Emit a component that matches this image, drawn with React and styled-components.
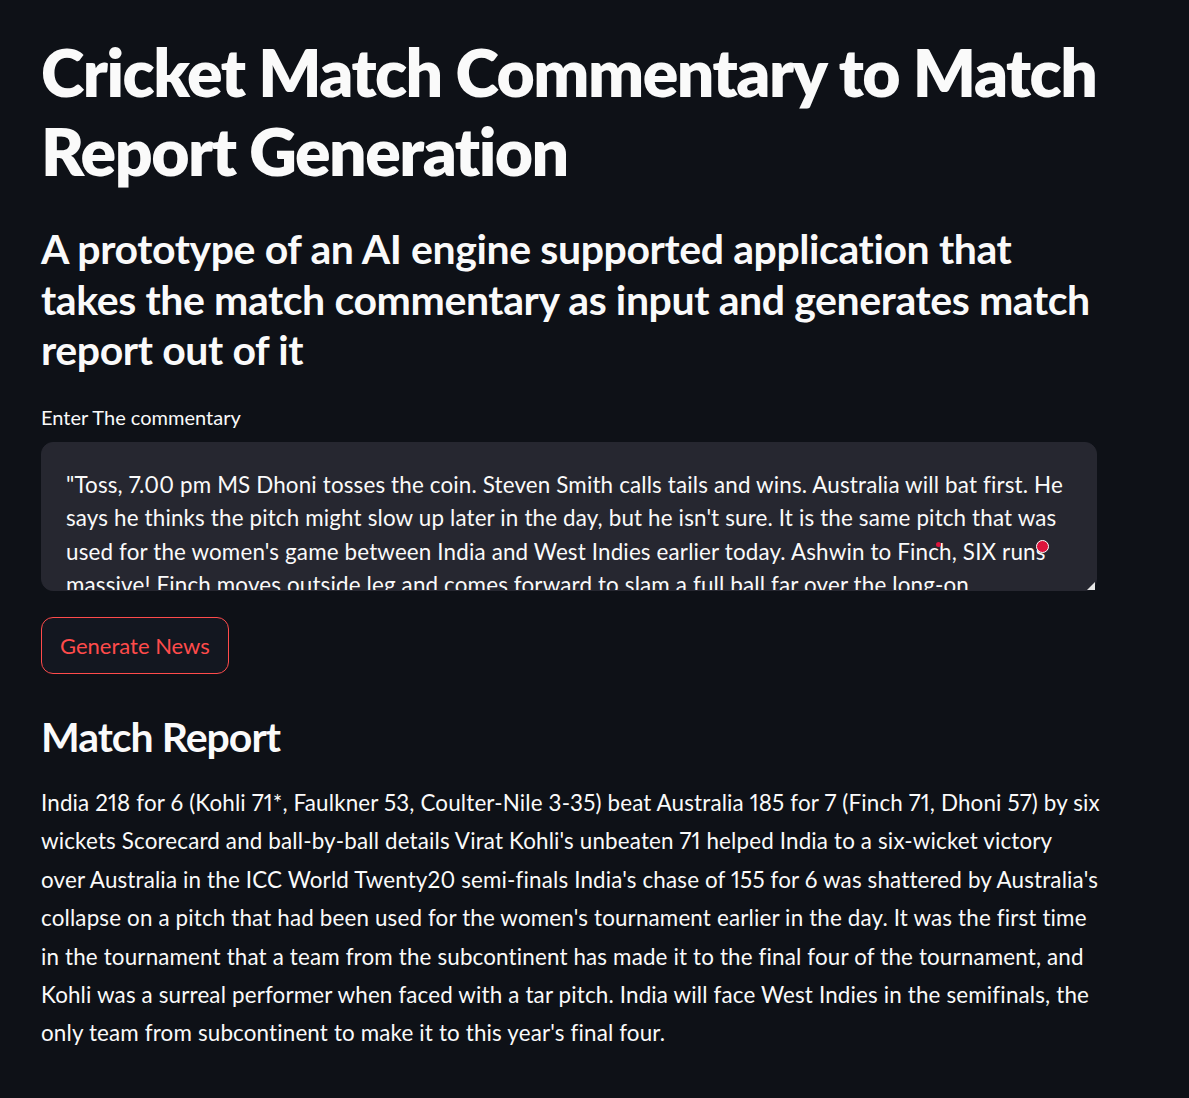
import React from "react";
import styled, { createGlobalStyle } from "styled-components";

const GlobalStyle = createGlobalStyle`
  html, body {
    margin: 0;
    padding: 0;
    background-color: #0e1117;
  }
  body {
    font-family: "Lato", "Noto Sans", sans-serif;
    color: #fafafa;
  }
`;

const Page = styled.div`
  width: 100%;
  min-height: 1098px;
  background-color: #0e1117;
`;

const Main = styled.div`
  width: 1056px;
  padding: 32px 0 40px 41px;
  display: flex;
  flex-direction: column;
`;

const Title = styled.h1`
  margin: 0;
  font-size: 66px;
  line-height: 1.2;
  font-weight: 800;
  letter-spacing: -1.5px;
`;

const SubHeader = styled.h3`
  margin: ${(props) => (props.type === "report" ? "38px 0 0" : "34px 0 0")};
  font-size: 41px;
  line-height: 50.4px;
  font-weight: 700;
  letter-spacing: ${(props) => (props.type === "report" ? "-1px" : "-0.4px")};
`;

const Line = styled.span`
  display: block;
  white-space: nowrap;
`;

const Label = styled.label`
  margin-top: 26px;
  font-size: 20px;
  line-height: 31px;
`;

const Field = styled.div`
  position: relative;
  margin-top: 9px;
`;

const TextArea = styled.textarea`
  box-sizing: border-box;
  display: block;
  width: 1056px;
  height: 149px;
  padding: 25px 24px;
  border: 1px solid #262730;
  border-radius: 12px;
  background-color: #262730;
  color: #fafafa;
  font-family: "Lato", "Noto Sans", sans-serif;
  font-size: 22.4px;
  line-height: 33.6px;
  letter-spacing: 0.15px;
  font-variant-numeric: proportional-nums;
  resize: none;
  outline: none;
  overflow: hidden;
`;

const Grip = styled.span`
  position: absolute;
  right: 2px;
  bottom: 1px;
  width: 0;
  height: 0;
  border-style: solid;
  border-width: 0 0 8px 8px;
  border-color: transparent transparent #e6e6e6 transparent;
`;

const Dot = styled.span`
  position: absolute;
  border-radius: 50%;
  background-color: #dc143c;
  left: ${(props) => props.x}px;
  top: ${(props) => props.y}px;
  width: ${(props) => props.size}px;
  height: ${(props) => props.size}px;
  border: ${(props) => (props.ring ? "1.5px solid #ffffff" : "none")};
  box-sizing: border-box;
`;

const Button = styled.button`
  align-self: flex-start;
  margin-top: 26px;
  height: 57px;
  padding: 0 18px;
  border: 1px solid #ff4b4b;
  border-radius: 12px;
  background-color: #131720;
  color: #ff4b4b;
  font-family: "Lato", "Noto Sans", sans-serif;
  font-size: 22px;
`;

const Report = styled.p`
  margin: 22px 0 0;
  font-size: 22.4px;
  line-height: 38.4px;
  letter-spacing: 0.15px;
  font-variant-numeric: proportional-nums;
`;

const commentary =
  "\"Toss, 7.00 pm MS Dhoni tosses the coin. Steven Smith calls tails and wins. Australia will bat first. He says he thinks the pitch might slow up later in the day, but he isn't sure. It is the same pitch that was used for the women's game between India and West Indies earlier today. Ashwin to Finch, SIX runs massive! Finch moves outside leg and comes forward to slam a full ball far over the long-on boundary. Ashwin to Finch, no run, flighted on off stump and pushed back to the bowler.\"";

const titleLines = ["Cricket Match Commentary to Match", "Report Generation"];

const subLines = [
  "A prototype of an AI engine supported application that",
  "takes the match commentary as input and generates match",
  "report out of it",
];

const reportLines = [
  "India 218 for 6 (Kohli 71*, Faulkner 53, Coulter-Nile 3-35) beat Australia 185 for 7 (Finch 71, Dhoni 57) by six",
  "wickets Scorecard and ball-by-ball details Virat Kohli's unbeaten 71 helped India to a six-wicket victory",
  "over Australia in the ICC World Twenty20 semi-finals India's chase of 155 for 6 was shattered by Australia's",
  "collapse on a pitch that had been used for the women's tournament earlier in the day. It was the first time",
  "in the tournament that a team from the subcontinent has made it to the final four of the tournament, and",
  "Kohli was a surreal performer when faced with a tar pitch. India will face West Indies in the semifinals, the",
  "only team from subcontinent to make it to this year's final four.",
];

const App = () => {
  return (
    <Page>
      <GlobalStyle />
      <Main>
        <Title>
          {titleLines.map((t) => (
            <Line key={t}>{t}</Line>
          ))}
        </Title>
        <SubHeader>
          {subLines.map((t) => (
            <Line key={t}>{t}</Line>
          ))}
        </SubHeader>
        <Label htmlFor="commentary">Enter The commentary</Label>
        <Field>
          <TextArea id="commentary" defaultValue={commentary} />
          <Dot x={895} y={100} size={5} />
          <Dot x={995} y={98} size={13} ring />
          <Grip />
        </Field>
        <Button>Generate News</Button>
        <SubHeader type="report">Match Report</SubHeader>
        <Report>
          {reportLines.map((t) => (
            <Line key={t}>{t}</Line>
          ))}
        </Report>
      </Main>
    </Page>
  );
};

export default App;
